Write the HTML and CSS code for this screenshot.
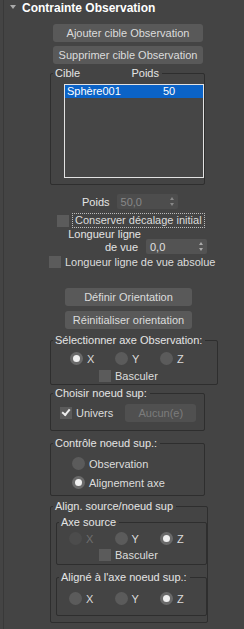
FILE: index.html
```html
<!DOCTYPE html>
<html>
<head>
  <meta charset="utf-8">
  <title>Contrainte Observation</title>
  <link rel="stylesheet" href="styles.css">
</head>
<body>
  <div class="panel">
    <div class="rollout-title">
      <span class="tri"></span>
      <span>Contrainte Observation</span>
    </div>

    <div class="content">
      <button type="button" class="btn btn-wide btn-first">Ajouter cible Observation</button>
      <button type="button" class="btn btn-wide">Supprimer cible Observation</button>

      <fieldset class="group group-targets">
        <legend class="cols"><span class="col-name">Cible</span><span>Poids</span></legend>
        <div class="listbox">
          <div class="list-row selected"><span class="col-name">Sphère001</span><span>50</span></div>
        </div>
      </fieldset>

      <div class="row row-weight">
        <span class="label">Poids</span>
        <div class="spinner disabled"><span>50,0</span><span class="arrows"></span></div>
      </div>

      <div class="row row-keep">
        <span class="check"></span>
        <span class="focus-label">Conserver décalage initial</span>
      </div>

      <div class="row row-length">
        <span class="label two-line">Longueur ligne<br><span class="second">de vue</span></span>
        <div class="spinner"><span>0,0</span><span class="arrows"></span></div>
      </div>

      <div class="row row-abs">
        <span class="check"></span>
        <span>Longueur ligne de vue absolue</span>
      </div>

      <button type="button" class="btn btn-mid btn-orient">Définir Orientation</button>
      <button type="button" class="btn btn-mid">Réinitialiser orientation</button>

      <fieldset class="group group-axis">
        <legend>Sélectionner axe Observation:</legend>
        <div class="radios">
          <span class="radio on"></span><span class="rlabel">X</span>
          <span class="radio"></span><span class="rlabel">Y</span>
          <span class="radio"></span><span class="rlabel">Z</span>
        </div>
        <div class="flip"><span class="check"></span><span>Basculer</span></div>
      </fieldset>

      <fieldset class="group group-up">
        <legend>Choisir noeud sup:</legend>
        <div class="up-row">
          <span class="check checked"></span><span class="up-label">Univers</span>
          <button type="button" class="btn btn-none" disabled>Aucun(e)</button>
        </div>
      </fieldset>

      <fieldset class="group group-ctrl">
        <legend>Contrôle noeud sup.:</legend>
        <div class="opt opt-first"><span class="radio"></span><span>Observation</span></div>
        <div class="opt"><span class="radio on"></span><span>Alignement axe</span></div>
      </fieldset>

      <fieldset class="group group-align">
        <legend>Align. source/noeud sup</legend>
        <fieldset class="group inner">
          <legend>Axe source</legend>
          <div class="radios">
            <span class="radio off"></span><span class="rlabel muted">X</span>
            <span class="radio"></span><span class="rlabel">Y</span>
            <span class="radio on"></span><span class="rlabel">Z</span>
          </div>
          <div class="flip"><span class="check"></span><span>Basculer</span></div>
        </fieldset>
        <fieldset class="group inner inner-last">
          <legend>Aligné à l'axe noeud sup.:</legend>
          <div class="radios">
            <span class="radio"></span><span class="rlabel">X</span>
            <span class="radio"></span><span class="rlabel">Y</span>
            <span class="radio on"></span><span class="rlabel">Z</span>
          </div>
        </fieldset>
      </fieldset>
    </div>
  </div>
</body>
</html>
```

FILE: styles.css
```css
html, body {
  margin: 0;
  padding: 0;
  background: #444;
  color: #dcdcdc;
  font-family: 'Liberation Sans', Tahoma, sans-serif;
  font-size: 11px;
}
.panel {
  width: 241px;
  height: 629px;
  box-sizing: border-box;
  border-left: 1px solid #393939;
  margin-left: 3px;
}
.rollout-title {
  display: flex;
  align-items: center;
  height: 14px;
  padding: 1px 0 1px 6px;
  font-weight: bold;
  font-size: 12px;
  color: #fff;
}
.tri {
  width: 0;
  height: 0;
  border-left: 3px solid transparent;
  border-right: 3px solid transparent;
  border-top: 4px solid #aaa;
  margin: -2px 6px 0 0;
}
.content {
  padding-left: 46px;
}
.btn {
  display: block;
  background: #595959;
  color: #dcdcdc;
  border: none;
  border-radius: 3px;
  font-family: inherit;
  font-size: 11px;
  padding: 0;
  height: 18px;
}
.btn-wide {
  width: 150px;
  margin: 4px 0 0 3px;
}
.btn-first { margin-top: 8px; }
.btn-mid {
  width: 127px;
  margin: 5px 0 0 15px;
}
.btn-orient { margin-top: 20px; }

/* group boxes */
.group {
  margin: 0;
  padding: 0;
  border: 1px solid #2e2e2e;
  border-radius: 2px;
  box-sizing: border-box;
  width: 155px;
}
.group legend {
  padding: 0 3px 0 2px;
  margin-left: 2px;
  line-height: 13px;
  color: #e4e4e4;
}
.group-targets {
  height: 118px;
  margin-top: 3px;
}
.cols {
  display: flex;
  width: 104px;
}
.col-name { width: 79px; }
.listbox {
  margin: 4px 0 0 13px;
  width: 138px;
  height: 92px;
  border: 1px solid #e2e2e2;
  background: #464646;
}
.list-row {
  display: flex;
  height: 13px;
  line-height: 13px;
  padding-left: 2px;
  color: #fff;
}
.list-row .col-name { width: 96px; }
.selected { background: #0b63c7; }

.row {
  display: flex;
  align-items: center;
}
.label { color: #e4e4e4; }
.spinner {
  display: flex;
  align-items: center;
  justify-content: space-between;
  width: 61px;
  height: 15px;
  box-sizing: border-box;
  padding: 0 3px 0 4px;
  background: #535353;
  border-radius: 2px;
  color: #e0e0e0;
}
.spinner.disabled { background: #4d4d4d; color: #888; }
.arrows {
  width: 5px;
  height: 9px;
  position: relative;
}
.arrows::before, .arrows::after {
  content: '';
  position: absolute;
  left: 0;
  border-left: 2.5px solid transparent;
  border-right: 2.5px solid transparent;
}
.arrows::before { top: 0; border-bottom: 3px solid #aaa; }
.arrows::after { bottom: 0; border-top: 3px solid #aaa; }
.disabled .arrows::before { border-bottom-color: #888; }
.disabled .arrows::after { border-top-color: #888; }

.row-weight { margin: 9px 0 0 32px; gap: 7px; }
.row-keep { margin: 5px 0 0 7px; gap: 4px; }
.focus-label {
  outline: 1px dotted #bbb;
  padding: 0 2px;
  line-height: 13px;
}
.row-length { margin: 1px 0 0 18px; gap: 5px; }
.two-line {
  text-align: right;
  white-space: nowrap;
  width: 73px;
  line-height: 13px;
}
.two-line .second { margin-right: 3px; }
.row-length .spinner { align-self: flex-end; }
.row-abs { margin: 2px 0 0 -1px; gap: 4px; }

.check {
  display: inline-block;
  width: 12px;
  height: 12px;
  background: #5b5b5b;
  flex: none;
  position: relative;
}
.check.checked::after {
  content: '';
  position: absolute;
  left: 2px;
  top: 2px;
  width: 6px;
  height: 3px;
  border-left: 2px solid #eee;
  border-bottom: 2px solid #eee;
  transform: rotate(-50deg);
}

.radio {
  display: inline-block;
  width: 13px;
  height: 13px;
  border-radius: 50%;
  background: #5b5b5b;
  flex: none;
  position: relative;
}
.radio.on { background: #6a6a6a; }
.radio.on::after {
  content: '';
  position: absolute;
  left: 3px;
  top: 3px;
  width: 7px;
  height: 7px;
  border-radius: 50%;
  background: #f0f0f0;
}
.radio.off { background: #4c4c4c; }
.radios {
  display: flex;
  align-items: center;
  padding-left: 19px;
  height: 15px;
}
.rlabel {
  width: 32px;
  box-sizing: border-box;
  padding-left: 4px;
}
.muted { color: #6f6f6f; }
.flip {
  display: flex;
  align-items: center;
  gap: 4px;
  margin: 4px 0 0 48px;
}

.group-axis {
  width: 168px;
  height: 51px;
  margin-top: 5px;
}
.group-axis .radios { margin-top: 4px; }

.group-up {
  height: 44px;
  margin-top: 2px;
}
.up-row {
  display: flex;
  align-items: center;
  margin: 4px 0 0 9px;
}
.up-label { margin-left: 4px; }
.btn-none {
  width: 71px;
  margin-left: 12px;
  background: #505050;
  color: #7c7c7c;
}

.group-ctrl {
  height: 59px;
  margin-top: 6px;
}
.opt {
  display: flex;
  align-items: center;
  gap: 4px;
  margin-left: 21px;
  height: 19px;
}
.opt-first { margin-top: 4px; }

.group-align {
  height: 123px;
  margin-top: 4px;
}
.inner {
  width: 143px;
  margin: 3px 0 0 5px;
  height: 49px;
}
.inner .radios { margin-top: 2px; padding-left: 12px; }
.inner .rlabel { width: 32.5px; }
.inner .flip { margin: 3px 0 0 42px; }
.inner-last {
  height: 45px;
  margin-top: 6px;
}
.inner-last .radios { margin-top: 7px; }
```
